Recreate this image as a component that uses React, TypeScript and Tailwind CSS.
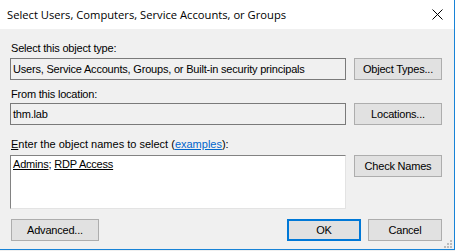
import { ReactNode } from "react";

function Btn({ children, def, className }: { children: ReactNode; def?: boolean; className?: string }) {
    return (
        <div
            className={
                "h-[22px] flex items-center justify-center bg-[#e1e1e1] text-black " +
                (def ? "border-2 border-[#0078d7] " : "border border-[#adadad] ") +
                (className ?? "")
            }
        >
            {children}
        </div>
    );
}

function ReadBox({ text }: { text: string }) {
    return (
        <div className="w-[336px] h-[22px] border border-[#7a7a7a] bg-[#f0f0f0] flex items-center pl-[2px] text-black">
            {text}
        </div>
    );
}

export default function App() {
    return (
        <div className="w-[455px] h-[251px] bg-[#f0f0f0] overflow-hidden font-['Liberation_Sans',Arial,sans-serif] text-[11px] leading-[13px] tracking-[-0.2px]">
            <div className="relative h-[250px] border-r border-b border-[#1883d7] flex flex-col">
                {/* title bar */}
                <div className="h-[29px] bg-white flex items-center pl-[7px] pr-[10px]">
                    <span className="font-['Open_Sans',sans-serif] text-[11.2px] tracking-normal text-black">
                        Select Users, Computers, Service Accounts, or Groups
                    </span>
                    <svg className="ml-auto mr-[1px]" width="11" height="11" viewBox="0 0 11 11">
                        <path d="M0.5 0.5 L10.5 10.5 M10.5 0.5 L0.5 10.5" stroke="#000" strokeWidth="1" />
                    </svg>
                </div>

                <div className="flex flex-col px-[10px]">
                    <div className="mt-[13px] pl-[1px]">Select this object type:</div>
                    <div className="mt-[3px] flex items-start">
                        <ReadBox text="Users, Service Accounts, Groups, or Built-in security principals" />
                        <Btn className="ml-[8px] w-[88px]">Object Types...</Btn>
                    </div>

                    <div className="mt-[8px] pl-[1px]">From this location:</div>
                    <div className="mt-[2px] flex items-start">
                        <ReadBox text="thm.lab" />
                        <Btn className="ml-[8px] w-[88px]">Locations...</Btn>
                    </div>

                    <div className="mt-[13px] pl-[1px] tracking-normal">
                        <span className="underline">E</span>nter the object names to select (
                        <span className="text-[#0066cc] underline">examples</span>):
                    </div>
                    <div className="mt-[4px] flex items-start">
                        <div className="w-[336px] h-[54px] bg-white border-t border-l border-[#828282] border-r-[#e3e3e3] border-b-[#e3e3e3] border-r border-b pl-[2px] pt-[2px] text-black">
                            <span className="underline">Admins</span>; <span className="underline">RDP Access</span>
                        </div>
                        <Btn className="ml-[8px] w-[88px]">Check Names</Btn>
                    </div>

                    <div className="mt-[10px] flex items-start">
                        <Btn className="ml-[1px] w-[88px]">Advanced...</Btn>
                        <Btn def className="ml-auto w-[74px]">OK</Btn>
                        <Btn className="ml-[7px] mr-[2px] w-[74px]">Cancel</Btn>
                    </div>
                </div>

                {/* size grip */}
                <div className="absolute right-[2px] bottom-[1px] grid grid-cols-3 gap-[1px]">
                    <span className="w-[2px] h-[2px]" />
                    <span className="w-[2px] h-[2px]" />
                    <span className="w-[2px] h-[2px] bg-[#bcbcbc]" />
                    <span className="w-[2px] h-[2px]" />
                    <span className="w-[2px] h-[2px] bg-[#bcbcbc]" />
                    <span className="w-[2px] h-[2px] bg-[#bcbcbc]" />
                    <span className="w-[2px] h-[2px] bg-[#bcbcbc]" />
                    <span className="w-[2px] h-[2px] bg-[#bcbcbc]" />
                    <span className="w-[2px] h-[2px] bg-[#bcbcbc]" />
                </div>
            </div>
        </div>
    );
}
